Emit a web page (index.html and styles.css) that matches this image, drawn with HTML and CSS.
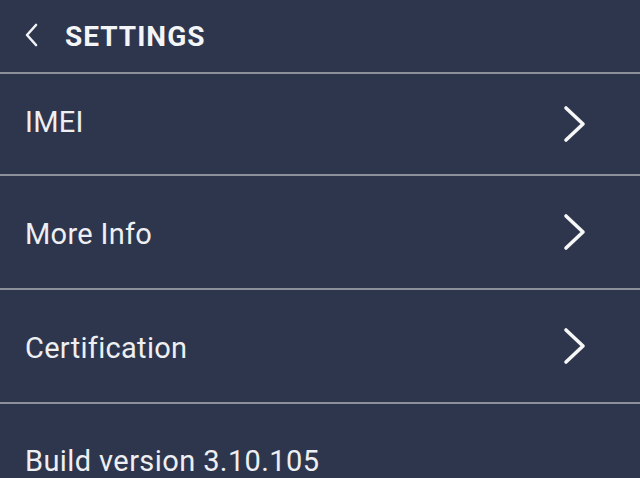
FILE: index.html
```html
<!DOCTYPE html>
<html>
<head>
    <meta charset="UTF-8">
    <meta name="viewport" content="width=device-width, initial-scale=1.0">
    <title>Settings</title>
    <link rel="stylesheet" href="styles.css">
</head>
<body>
    <div class="screen">
        <div class="header">
            <svg class="back" width="14" height="24" viewBox="0 0 14 24">
                <path d="M12 2 L3 12 L12 22" fill="none" stroke="#f2f3f5" stroke-width="2.6" stroke-linecap="round" stroke-linejoin="round"/>
            </svg>
            <span class="title">SETTINGS</span>
        </div>
        <div class="row row-first">
            <span class="label">IMEI</span>
            <svg class="chev" width="26" height="40" viewBox="0 0 26 40">
                <path d="M4 4 L21 20 L4 36" fill="none" stroke="#f7f7f8" stroke-width="3.6" stroke-linecap="round" stroke-linejoin="round"/>
            </svg>
        </div>
        <div class="row">
            <span class="label">More Info</span>
            <svg class="chev" width="26" height="40" viewBox="0 0 26 40">
                <path d="M4 4 L21 20 L4 36" fill="none" stroke="#f7f7f8" stroke-width="3.6" stroke-linecap="round" stroke-linejoin="round"/>
            </svg>
        </div>
        <div class="row">
            <span class="label">Certification</span>
            <svg class="chev" width="26" height="40" viewBox="0 0 26 40">
                <path d="M4 4 L21 20 L4 36" fill="none" stroke="#f7f7f8" stroke-width="3.6" stroke-linecap="round" stroke-linejoin="round"/>
            </svg>
        </div>
        <div class="footer">
            <span class="build">Build version 3.10.105</span>
        </div>
    </div>
</body>
</html>
```

FILE: styles.css
```css
html, body {margin: 0; padding: 0}
body {
    background-color: #2e364d;
    font-family: Roboto, "Liberation Sans", sans-serif;
    color: #eeeff2;
}
.screen {
    width: 640px;
    height: 478px;
    overflow: hidden;
}
.header {
    height: 72px;
    display: flex;
    align-items: center;
    padding-left: 24px;
    border-bottom: 2px solid #8c9098;
}
.back {margin-top: -2px;}
.title {
    margin-left: 27px;
    font-size: 28px;
    font-weight: bold;
    letter-spacing: 1px;
    color: #f4f5f7;
}
.row {
    height: 112px;
    display: flex;
    align-items: center;
    justify-content: space-between;
    padding: 0 52px 0 25px;
    border-bottom: 2px solid #8c9098;
}
.row-first {height: 100px;}
.label {
    font-size: 29px;
    letter-spacing: 0.3px;
    margin-top: 3px;
}
.row-first .label {margin-top: -4px;}
.footer {
    padding: 40px 25px 0 25px;
}
.build {
    font-size: 29px;
    letter-spacing: 0.4px;
}
```
